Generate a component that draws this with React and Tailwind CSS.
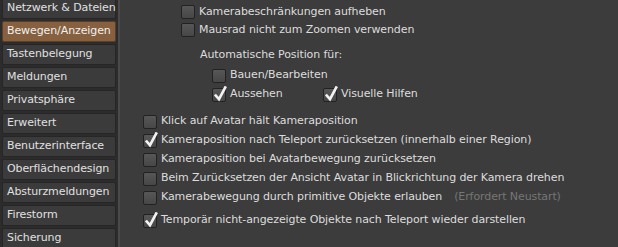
import React from 'react';

const tabs = [
  'Netzwerk & Dateien',
  'Bewegen/Anzeigen',
  'Tastenbelegung',
  'Meldungen',
  'Privatsphäre',
  'Erweitert',
  'Benutzerinterface',
  'Oberflächendesign',
  'Absturzmeldungen',
  'Firestorm',
  'Sicherung',
];

const CheckBox = ({ checked }) => (
  <span className="relative inline-block w-[14px] h-[14px] shrink-0 rounded-[2px] border border-[#222] bg-gradient-to-b from-[#575757] to-[#474747]">
    {checked && (
      <svg className="absolute left-[1px] top-[-3px]" width="13" height="16" viewBox="0 0 13 16">
        <path d="M1.8 9.5 L5 13.2 L11.2 1.5" fill="none" stroke="#f2f2f2" strokeWidth="2.6" strokeLinecap="square" strokeLinejoin="miter" />
      </svg>
    )}
  </span>
);

const Row = ({ checked, label, note, h = 'h-[19px]', className = '' }) => (
  <div className={`flex items-center gap-[4px] whitespace-nowrap ${h} ${className}`}>
    <CheckBox checked={checked} />
    <span>{label}</span>
    {note && <span className="ml-[8px] text-[#767676]">{note}</span>}
  </div>
);

const App = () => {
  return (
    <div
      className="w-[618px] h-[247px] overflow-hidden flex bg-[#3c3c3c] text-[11px] tracking-[-0.1px] text-[#dcdcdc]"
      style={{ fontFamily: '"DejaVu Sans", sans-serif' }}
    >
      <div className="w-[118px] shrink-0 bg-[#2c2c2c] pl-[2px] pr-[2px] overflow-hidden">
        <div className="flex flex-col gap-[2px] mt-[-2px]">
          {tabs.map((t, i) => (
            <div
              key={t}
              className={`h-[21px] flex items-center pl-[4px] rounded-[2px] border whitespace-nowrap ${
                i === 1
                  ? 'bg-[#86603f] border-[#5a3f28] text-[#f0f0f0]'
                  : 'bg-[#3b3b3b] border-[#262626] text-[#e0e0e0]'
              }`}
            >
              {t}
            </div>
          ))}
        </div>
      </div>
      <div className="w-[2px] shrink-0 bg-[#4a4a4a]" />
      <div className="flex-1 pt-[3px]">
        <div className="pl-[61px]">
          <Row label="Kamerabeschränkungen aufheben" h="h-[18px]" />
          <Row label="Mausrad nicht zum Zoomen verwenden" h="h-[18px]" />
          <div className="pl-[19px] mt-[7px] h-[18px] flex items-center">Automatische Position für:</div>
          <div className="pl-[31px] mt-[2px]">
            <Row label="Bauen/Bearbeiten" />
            <div className="flex">
              <Row checked label="Aussehen" className="w-[111px]" />
              <Row checked label="Visuelle Hilfen" />
            </div>
          </div>
        </div>
        <div className="pl-[23px] mt-[8px]">
          <Row label="Klick auf Avatar hält Kameraposition" />
          <Row checked label="Kameraposition nach Teleport zurücksetzen (innerhalb einer Region)" />
          <Row label="Kameraposition bei Avatarbewegung zurücksetzen" />
          <Row label="Beim Zurücksetzen der Ansicht Avatar in Blickrichtung der Kamera drehen" />
          <Row label="Kamerabewegung durch primitive Objekte erlauben" note="(Erfordert Neustart)" />
          <Row checked label="Temporär nicht-angezeigte Objekte nach Teleport wieder darstellen" className="mt-[4px]" />
        </div>
      </div>
    </div>
  );
};

export default App;
